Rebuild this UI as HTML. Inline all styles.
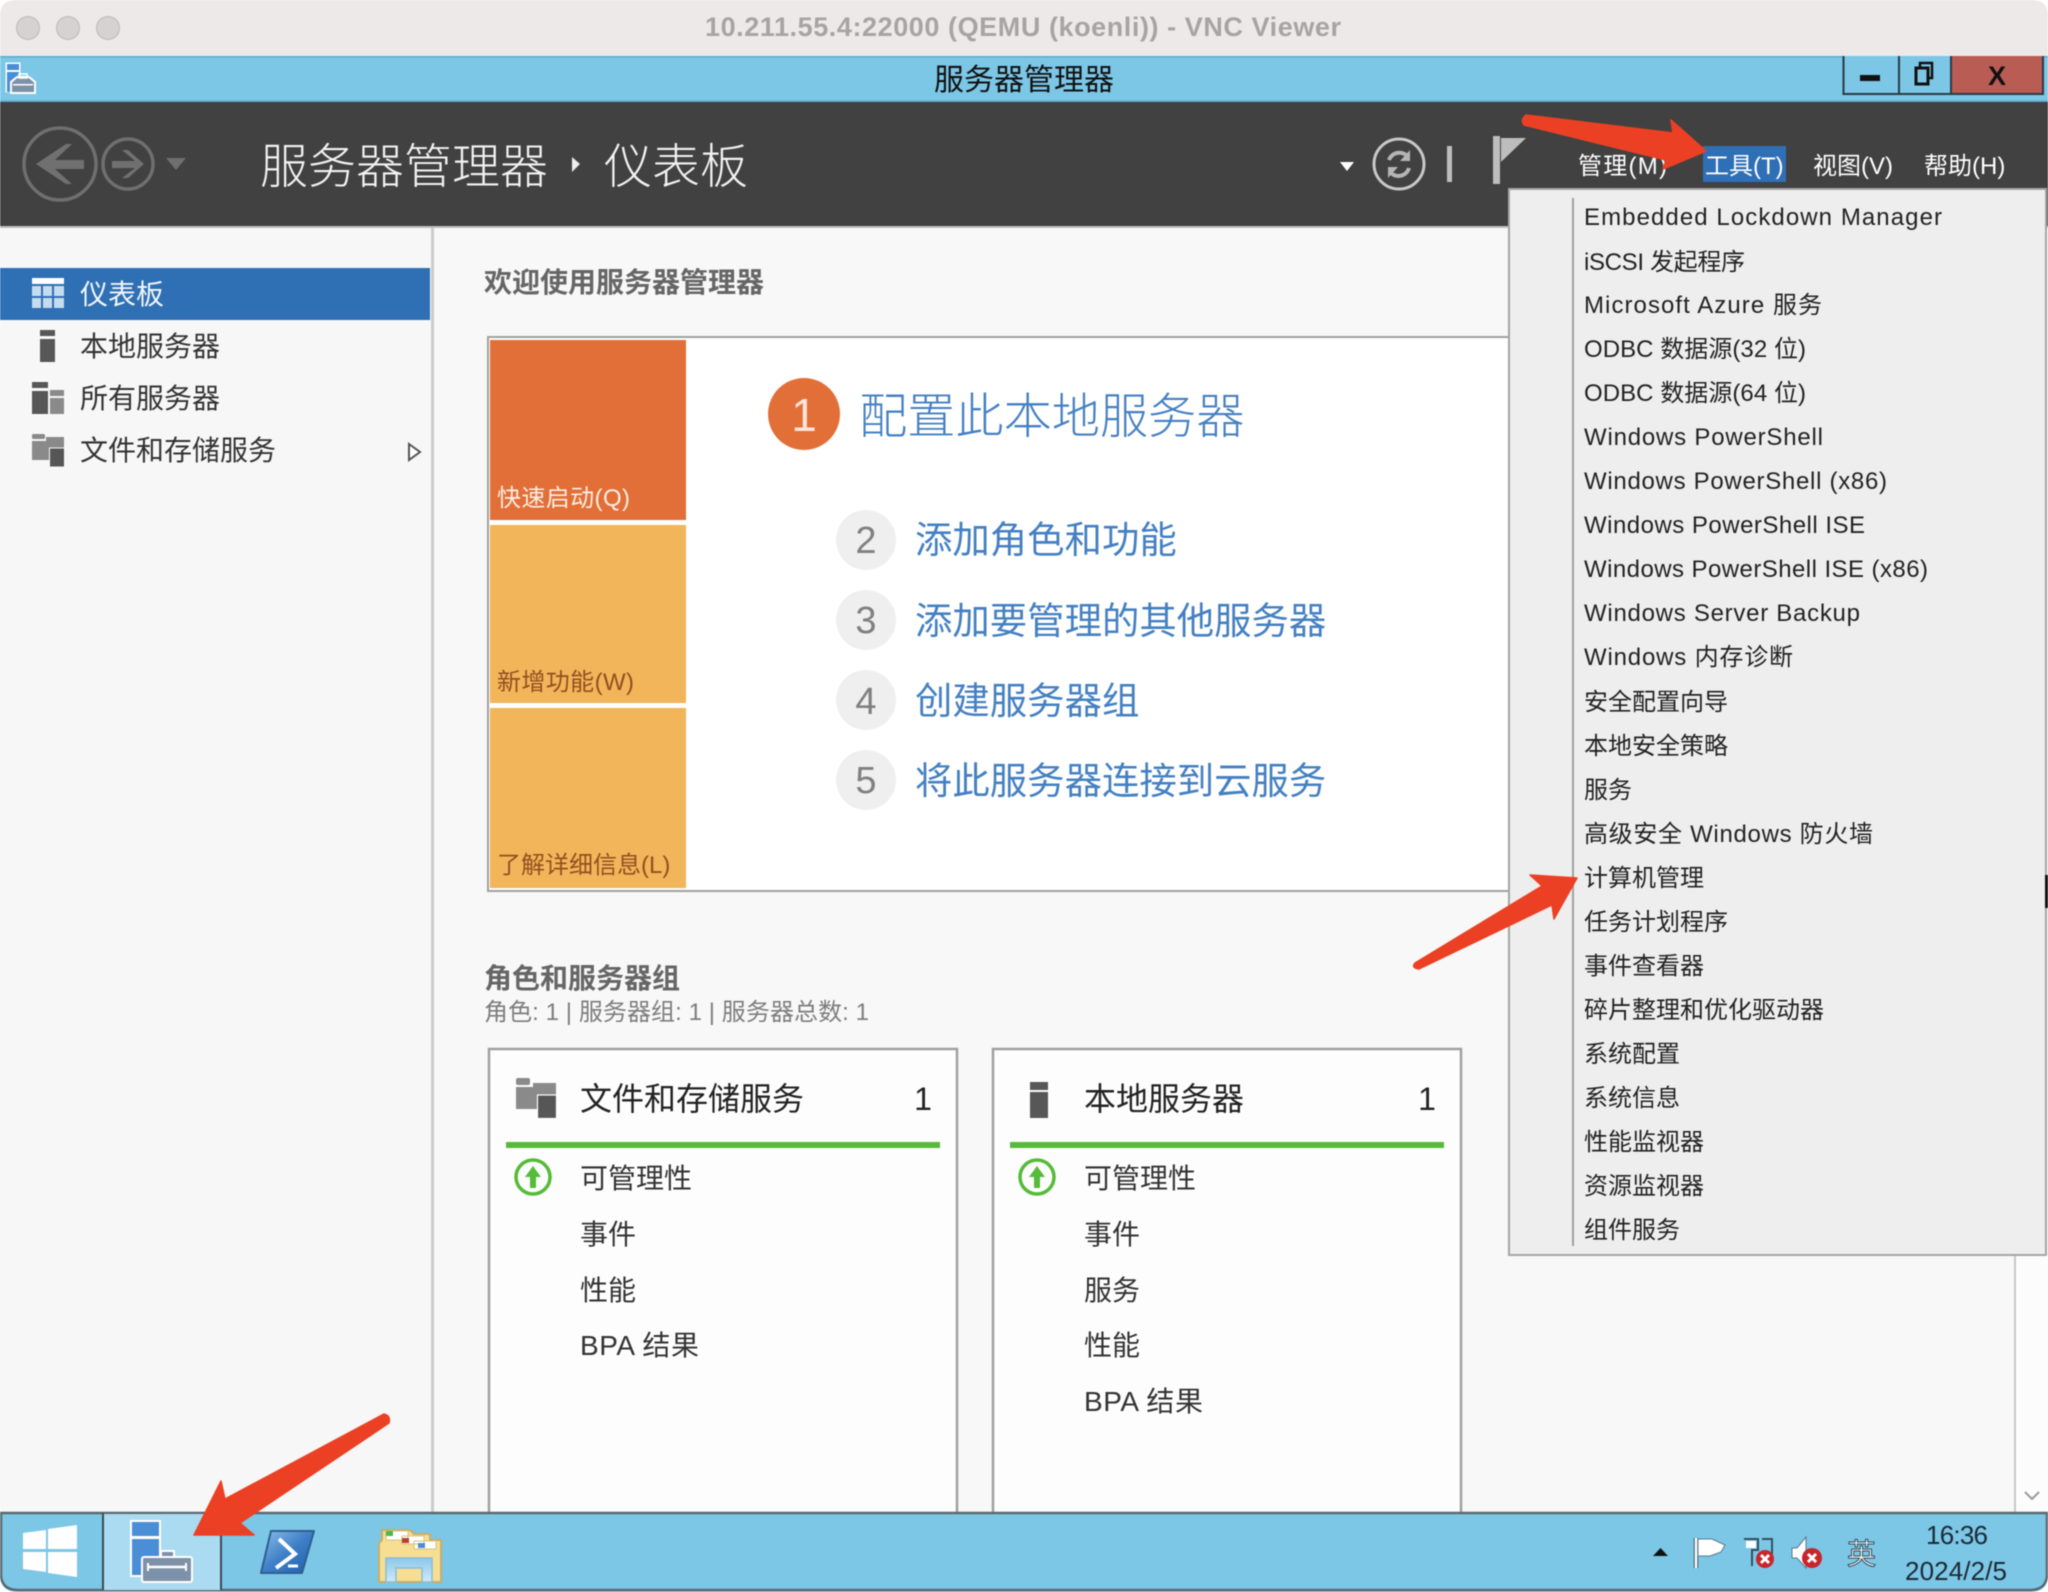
<!DOCTYPE html>
<html lang="zh-CN"><head><meta charset="utf-8"><title>VNC Viewer</title>
<style>
html,body{margin:0;padding:0;background:#fff;width:2048px;height:1592px;overflow:hidden}
svg{display:block;filter:blur(.5px)}
text{font-family:"Liberation Sans","Noto Sans CJK SC",sans-serif;white-space:pre}
.m{font-size:24px;fill:#222}
.s{font-size:28px;fill:#333}
.l{font-size:37.400px;fill:#4480C2}
.t{font-size:24px;fill:#fff}
</style></head><body>
<svg width="2048" height="1592" viewBox="0 0 2048 1592" xmlns="http://www.w3.org/2000/svg">
<defs>
<linearGradient id="ps" x1="0" y1="0" x2="1" y2="1"><stop offset="0" stop-color="#8fc0e8"/><stop offset=".5" stop-color="#3f7fc8"/><stop offset="1" stop-color="#1f5ea8"/></linearGradient>
<linearGradient id="gl" x1="0" y1="0" x2="0" y2="1"><stop offset="0" stop-color="#8cc8ea"/><stop offset="1" stop-color="#cfeaf8"/></linearGradient>
</defs>
<rect width="2048" height="1592" fill="#fff"/>
<!-- mac title bar -->
<path d="M0 56V16Q0 0 16 0H2032Q2048 0 2048 16V56Z" fill="#EEE9E9"/>
<g fill="#D6D2D2" stroke="#BDB9B9" stroke-width="1"><circle cx="28" cy="28" r="11.500"/><circle cx="68" cy="28" r="11.500"/><circle cx="108" cy="28" r="11.500"/></g>
<text x="705" y="36" font-size="27" font-weight="700" fill="#A8A4A4" textLength="636">10.211.55.4:22000 (QEMU (koenli)) - VNC Viewer</text>
<!-- blue title bar -->
<rect x="0" y="56" width="2048" height="46" fill="#7CC6E6"/>
<rect x="0" y="56" width="2048" height="1.500" fill="#5fa8c8"/>
<rect x="0" y="100.500" width="2048" height="1.500" fill="#5fa8c8"/>
<g>
<rect x="5.500" y="62.500" width="15" height="30" fill="#fff"/><rect x="7" y="64" width="12" height="6" fill="#4A8FD6"/><rect x="7" y="72" width="12" height="20" fill="#4A8FD6"/>
<path d="M11 93V82L17 77H29L35 82V93Z" fill="#7D91A8" stroke="#fff" stroke-width="2"/><rect x="19" y="74" width="8" height="4" fill="none" stroke="#fff" stroke-width="1.500"/><rect x="13" y="84" width="20" height="1.500" fill="#fff"/>
</g>
<text x="934" y="90" font-size="30" fill="#111">服务器管理器</text>
<rect x="1843" y="56" width="200" height="39" fill="#7CC6E6"/>
<rect x="1951" y="56" width="92" height="39" fill="#B85C54"/>
<path d="M1843.500 56V94H2043V56M1899 56V94M1951 56V94" fill="none" stroke="#2A3A44" stroke-width="2"/>
<rect x="1860" y="75" width="20" height="6" fill="#111"/>
<rect x="1916" y="68" width="12" height="16" fill="none" stroke="#111" stroke-width="3"/><path d="M1920 67V63H1932V78H1929" fill="none" stroke="#111" stroke-width="2.500"/>
<text x="1997" y="85" text-anchor="middle" font-size="27" font-weight="700" fill="#111">X</text>
<!-- dark header -->
<rect x="0" y="102" width="2048" height="124" fill="#414141"/>
<rect x="0" y="226" width="2048" height="2" fill="#BDBDBD"/>
<g fill="none" stroke="#6F6F6F" stroke-width="3.500"><circle cx="60" cy="164" r="36"/><circle cx="128" cy="164" r="25"/></g>
<path d="M36 164L66 144H72L55 160H84V169H55L72 184H66Z" fill="#707070"/>
<path d="M144 164L128 150H122L135 161H112V168H135L122 178H128Z" fill="#707070"/>
<path d="M166 158H186L176 170Z" fill="#6F6F6F"/>
<text x="260" y="183" font-size="48" font-weight="300" fill="#F2F2F2">服务器管理器</text>
<path d="M572 157L580 164L572 172Z" fill="#EDEDED"/>
<text x="604" y="183" font-size="48" font-weight="300" fill="#F2F2F2">仪表板</text>
<path d="M1340 162H1354L1347 171Z" fill="#fff"/>
<circle cx="1399" cy="164" r="25" fill="none" stroke="#C8C8C8" stroke-width="3"/>
<path d="M1389 160A11 11 0 0 1 1408 157M1409 168A11 11 0 0 1 1390 172" fill="none" stroke="#B5B5B5" stroke-width="4"/><path d="M1410 150V161H1400ZM1388 178V167H1398Z" fill="#B5B5B5"/>
<rect x="1447" y="146" width="5" height="36" fill="#BDBDBD"/>
<rect x="1493" y="136" width="7" height="48" fill="#BDBDBD"/>
<path d="M1501 138H1526L1501 162Z" fill="#BDBDBD"/>
<text class="t" x="1578" y="174" textLength="89">管理(M)</text>
<rect x="1703" y="146" width="83" height="36" fill="#2F6FB5"/>
<text class="t" x="1705" y="174">工具(T)</text>
<text class="t" x="1813" y="174">视图(V)</text>
<text class="t" x="1924" y="174">帮助(H)</text>
<!-- sidebar & main -->
<rect x="0" y="228" width="431" height="1284" fill="#F7F7F7"/>
<rect x="431" y="228" width="3" height="1284" fill="#CCCCCC"/>
<rect x="434" y="228" width="1614" height="1284" fill="#F8F8F8"/>
<rect x="0" y="268" width="430" height="52" fill="#2F6FB3"/>
<rect x="32" y="278" width="32" height="6" fill="#fff"/>
<g fill="#C5DCEE"><rect x="32" y="286" width="9" height="10"/><rect x="43" y="286" width="9" height="10"/><rect x="54" y="286" width="10" height="10"/><rect x="32" y="298" width="9" height="10"/><rect x="43" y="298" width="9" height="10"/><rect x="54" y="298" width="10" height="10"/></g>
<text x="80" y="304" font-size="28" fill="#F0F6FB">仪表板</text>
<rect x="40" y="330" width="15" height="6" fill="#575757"/><rect x="40" y="339" width="15" height="23" fill="#575757"/>
<text class="s" x="80" y="356">本地服务器</text>
<rect x="32" y="382" width="16" height="6" fill="#575757"/><rect x="32" y="391" width="16" height="23" fill="#575757"/><rect x="50" y="390" width="14" height="6" fill="#8A8A8A"/><rect x="50" y="398" width="14" height="16" fill="#8A8A8A"/>
<text class="s" x="80" y="408">所有服务器</text>
<rect x="32" y="434" width="13" height="5" rx="1.500" fill="#8A8A8A"/><path d="M32 441H46V437H64V449H50V460H32Z" fill="#8A8A8A"/><rect x="49.500" y="448" width="15" height="19" fill="#565656" stroke="#F7F7F7" stroke-width="1"/>
<text class="s" x="80" y="460">文件和存储服务</text>
<path d="M409 444L420 452L409 460Z" fill="#fff" stroke="#555" stroke-width="2"/>
<!-- welcome -->
<text x="484" y="292" font-size="28" font-weight="700" fill="#666">欢迎使用服务器管理器</text>
<rect x="488" y="337" width="1100" height="554" fill="#fff" stroke="#A0A0A0" stroke-width="2"/>
<rect x="490" y="340" width="196" height="180" fill="#E26F38"/>
<rect x="490" y="525" width="196" height="178" fill="#F2B55A"/>
<rect x="490" y="708" width="196" height="180" fill="#F2B55A"/>
<text x="497" y="506" font-size="24" fill="#FBEDE2" textLength="133">快速启动(Q)</text>
<text x="497" y="690" font-size="24" fill="#934F1F" textLength="137">新增功能(W)</text>
<text x="497" y="873" font-size="24" fill="#934F1F">了解详细信息(L)</text>
<circle cx="804" cy="414" r="36" fill="#E26F38"/>
<text x="804" y="431" text-anchor="middle" font-size="46" fill="#FBE6DA">1</text>
<text x="859" y="433" font-size="48.200" font-weight="300" fill="#4480C2">配置此本地服务器</text>
<g fill="#EFEFEF"><circle cx="866" cy="540" r="30"/><circle cx="866" cy="620" r="30"/><circle cx="866" cy="700" r="30"/><circle cx="866" cy="780" r="30"/></g>
<g font-size="38" fill="#808080" text-anchor="middle"><text x="866" y="553">2</text><text x="866" y="633">3</text><text x="866" y="714">4</text><text x="866" y="793">5</text></g>
<text class="l" x="915" y="553">添加角色和功能</text>
<text class="l" x="915" y="634">添加要管理的其他服务器</text>
<text class="l" x="915" y="714">创建服务器组</text>
<text class="l" x="915" y="794">将此服务器连接到云服务</text>
<!-- roles -->
<text x="484" y="988" font-size="28" font-weight="700" fill="#666">角色和服务器组</text>
<text x="484" y="1020" font-size="24" fill="#7D7D7D" textLength="385">角色: 1 | 服务器组: 1 | 服务器总数: 1</text>
<rect x="489" y="1049" width="468" height="520" fill="#FDFDFD" stroke="#A0A0A0" stroke-width="2.500"/>
<rect x="993" y="1049" width="468" height="520" fill="#FDFDFD" stroke="#A0A0A0" stroke-width="2.500"/>
<rect x="516" y="1078" width="14" height="7" rx="2" fill="#8A8A8A"/><path d="M516 1087H533V1083H556V1098H538V1109H516Z" fill="#8A8A8A"/><rect x="537.500" y="1095" width="19" height="23.500" fill="#565656" stroke="#FDFDFD" stroke-width="1.200"/>
<text x="580" y="1110" font-size="32" fill="#222">文件和存储服务</text>
<text x="923" y="1110" font-size="32" fill="#222" text-anchor="middle">1</text>
<rect x="1030" y="1082" width="18" height="8" fill="#575757"/><rect x="1030" y="1092" width="18" height="26" fill="#575757"/>
<text x="1084" y="1110" font-size="32" fill="#222">本地服务器</text>
<text x="1427" y="1110" font-size="32" fill="#222" text-anchor="middle">1</text>
<rect x="506" y="1142" width="434" height="6" fill="#55BB38"/>
<rect x="1010" y="1142" width="434" height="6" fill="#55BB38"/>
<g fill="none" stroke="#55BB38" stroke-width="3.500"><circle cx="533" cy="1177" r="17"/><circle cx="1037" cy="1177" r="17"/></g>
<path d="M533 1166L541 1177H536V1188H530V1177H525Z" fill="#55BB38"/><path d="M1037 1166L1045 1177H1040V1188H1034V1177H1029Z" fill="#55BB38"/>
<text class="s" x="580" y="1188">可管理性</text>
<text class="s" x="580" y="1244">事件</text>
<text class="s" x="580" y="1300">性能</text>
<text class="s" x="580" y="1355" textLength="119">BPA 结果</text>
<text class="s" x="1084" y="1188">可管理性</text>
<text class="s" x="1084" y="1244">事件</text>
<text class="s" x="1084" y="1300">服务</text>
<text class="s" x="1084" y="1355">性能</text>
<text class="s" x="1084" y="1411" textLength="119">BPA 结果</text>
<!-- scrollbar -->
<rect x="2015" y="1256" width="33" height="256" fill="#FCFCFC"/>
<rect x="2014" y="1256" width="2" height="256" fill="#C8C8C8"/>
<path d="M2025 1492L2032 1499L2039 1492" fill="none" stroke="#9A9A9A" stroke-width="2"/>
<!-- menu -->
<rect x="1509" y="189" width="537" height="1066" fill="#EEEEEE" stroke="#A5A5A5" stroke-width="2"/>
<rect x="1572" y="198" width="2" height="1048" fill="#A0A0A0"/>
<rect x="2045" y="875" width="3" height="33" fill="#111"/>
<text class="m" x="1584" y="225" textLength="358">Embedded Lockdown Manager</text>
<text class="m" x="1584" y="270" textLength="161">iSCSI 发起程序</text>
<text class="m" x="1584" y="313" textLength="238">Microsoft Azure 服务</text>
<text class="m" x="1584" y="357" textLength="222">ODBC 数据源(32 位)</text>
<text class="m" x="1584" y="401" textLength="222">ODBC 数据源(64 位)</text>
<text class="m" x="1584" y="445" textLength="239">Windows PowerShell</text>
<text class="m" x="1584" y="489" textLength="303">Windows PowerShell (x86)</text>
<text class="m" x="1584" y="533" textLength="281">Windows PowerShell ISE</text>
<text class="m" x="1584" y="577" textLength="344">Windows PowerShell ISE (x86)</text>
<text class="m" x="1584" y="621" textLength="276">Windows Server Backup</text>
<text class="m" x="1584" y="665" textLength="209">Windows 内存诊断</text>
<text class="m" x="1584" y="710">安全配置向导</text>
<text class="m" x="1584" y="754">本地安全策略</text>
<text class="m" x="1584" y="798">服务</text>
<text class="m" x="1584" y="842" textLength="289">高级安全 Windows 防火墙</text>
<text class="m" x="1584" y="886">计算机管理</text>
<text class="m" x="1584" y="930">任务计划程序</text>
<text class="m" x="1584" y="974">事件查看器</text>
<text class="m" x="1584" y="1018">碎片整理和优化驱动器</text>
<text class="m" x="1584" y="1062">系统配置</text>
<text class="m" x="1584" y="1106">系统信息</text>
<text class="m" x="1584" y="1150">性能监视器</text>
<text class="m" x="1584" y="1194">资源监视器</text>
<text class="m" x="1584" y="1238">组件服务</text>
<!-- taskbar -->
<path d="M0 1512H2048V1574Q2048 1592 2030 1592H18Q0 1592 0 1574Z" fill="#7CC6E6"/>
<path d="M1 1513H2047V1574Q2047 1590 2030 1590H18Q1 1590 1 1574Z" fill="none" stroke="#5A6A72" stroke-width="2.500"/>
<rect x="103" y="1514" width="118" height="76" fill="#ABDBF0"/>
<path d="M103 1513V1590M221 1513V1590" stroke="#3C4A52" stroke-width="2"/>
<g fill="#fff"><path d="M23 1533L46 1530V1549H23Z"/><path d="M48 1529L77 1525V1549H48Z"/><path d="M23 1552H46V1572L23 1569Z"/><path d="M48 1552H77V1577L48 1573Z"/></g>
<rect x="130" y="1520" width="31" height="57" fill="#fff"/><rect x="132" y="1522" width="27" height="14" fill="#4A8FD6"/><rect x="132" y="1539" width="27" height="36" fill="#4A8FD6"/>
<rect x="161" y="1551" width="13" height="8" fill="#7D91A8" stroke="#fff" stroke-width="2"/>
<rect x="142" y="1557" width="50" height="25" rx="2" fill="#7D91A8" stroke="#fff" stroke-width="2"/>
<path d="M148 1567H186" stroke="#fff" stroke-width="2.500"/>
<path d="M148 1563V1571M186 1563V1571" stroke="#fff" stroke-width="2"/>
<path d="M271 1531H314L302 1573H261Z" fill="url(#ps)" stroke="#2F5E92" stroke-width="2" stroke-linejoin="round"/>
<path d="M279 1539L295 1554L276 1568" fill="none" stroke="#fff" stroke-width="4"/><path d="M288 1566H298" stroke="#fff" stroke-width="3"/>
<path d="M379 1582V1543L382 1540V1530H410L414 1534H430V1540H441V1582Z" fill="#F6DE92" stroke="#C9AE6A" stroke-width="2"/>
<path d="M386 1531H408V1540H386ZM402 1536H424V1544H402ZM414 1541H436V1549H414Z" fill="#fff" stroke="#D8C27E" stroke-width="1"/>
<rect x="386" y="1531" width="7" height="5" fill="#4FB848"/><rect x="402" y="1538" width="7" height="5" fill="#B8402E"/><rect x="418" y="1543" width="7" height="5" fill="#4A8FD6"/>
<path d="M386 1582V1558H432V1582H422V1568H396V1582Z" fill="url(#gl)" stroke="#8CBCD8" stroke-width="1.500"/>
<!-- tray -->
<path d="M1653 1556L1660.500 1548L1668 1556Z" fill="#111"/>
<path d="M1696 1568V1538" stroke="#3A5664" stroke-width="4.500"/><path d="M1696 1568V1538" stroke="#fff" stroke-width="2.500"/>
<path d="M1698 1539H1712L1725 1545L1721 1552L1710 1556H1698Z" fill="#fff" stroke="#5A7A8A" stroke-width="1"/>
<path d="M1744 1539H1758V1550H1752V1566M1762 1539H1772V1556" fill="none" stroke="#34505E" stroke-width="2"/><path d="M1746 1541H1756V1548H1746Z" fill="#fff"/>
<circle cx="1765" cy="1559" r="9" fill="#C8262B"/><path d="M1761 1555L1769 1563M1769 1555L1761 1563" stroke="#fff" stroke-width="3"/>
<path d="M1792 1548H1797L1806 1537V1568L1797 1558H1792Z" fill="#fff" stroke="#5A7A8A" stroke-width="1"/>
<circle cx="1812" cy="1558" r="10" fill="#C8262B"/><path d="M1808 1554L1816 1562M1816 1554L1808 1562" stroke="#fff" stroke-width="3"/>
<text x="1847" y="1564" font-size="29" fill="#fff" stroke="#2E4A58" stroke-width="1">英</text>
<text x="1926" y="1544" font-size="26" fill="#1C2A33" textLength="62">16:36</text>
<text x="1905" y="1580" font-size="26" fill="#1C2A33" textLength="102">2024/2/5</text>
<!-- red arrows -->
<g fill="#EC4024" stroke="#EC4024" stroke-width="1.500" stroke-linejoin="round">
<path d="M1526 115L1673 133L1671 120L1706 151L1663 169L1666 160L1524 125Q1520 120 1526 115Z"/>
<path d="M1415 963L1542 886L1530 875L1577 878L1554 919L1552 905L1419 969Q1411 968 1415 963Z"/>
<path d="M384 1414L225 1499L221 1481L194 1535H254L240 1523L389 1423Q391 1416 384 1414Z"/>
</g>
</svg>
</body></html>
